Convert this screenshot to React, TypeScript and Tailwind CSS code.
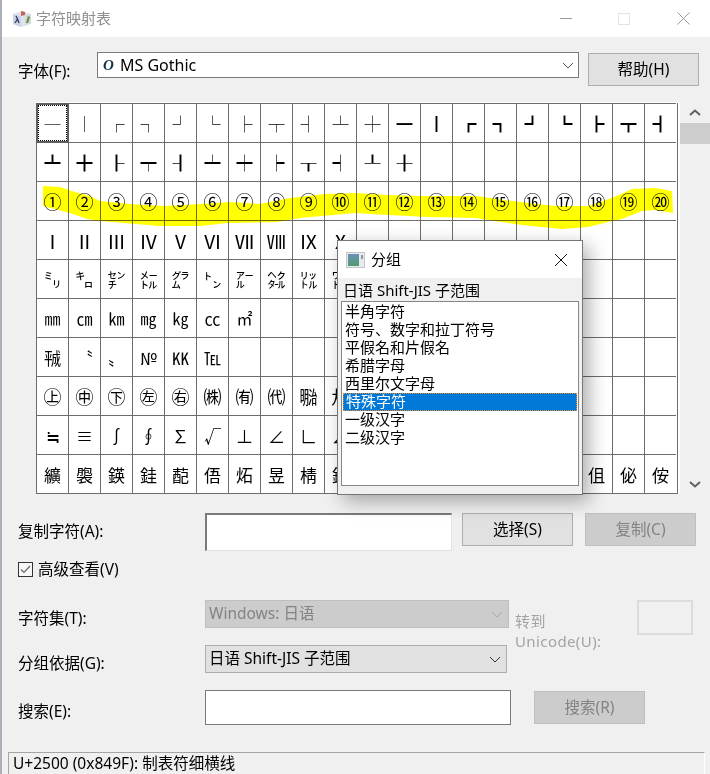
const UI_FONT = "font-['Noto_Sans','Noto_Sans_CJK_SC',sans-serif]"

const ROWS: { chars: string; size: string }[] = [
  { chars: '─│┌┐┘└├┬┤┴┼━┃┏┓┛┗┣┳┫', size: 'text-[16px]' },
  { chars: '┻╋┠┯┨┷┿┝┰┥┸╂', size: 'text-[16px]' },
  { chars: '①②③④⑤⑥⑦⑧⑨⑩⑪⑫⑬⑭⑮⑯⑰⑱⑲⑳', size: 'text-[18px]' },
  { chars: 'ⅠⅡⅢⅣⅤⅥⅦⅧⅨⅩ', size: 'text-[19px]' },
  { chars: '㍉㌔㌢㍍㌘㌧㌃㌶㍑㍗', size: 'text-[18px]' },
  { chars: '㎜㎝㎞㎎㎏㏄㎡', size: 'text-[16px]' },
  { chars: '㍻〝〟№㏍℡', size: 'text-[17px]' },
  { chars: '㊤㊥㊦㊧㊨㈱㈲㈹㍾㍽', size: 'text-[18px]' },
  { chars: '≒≡∫∮∑√⊥∠∟⊿', size: 'text-[17px]' },
  { chars: '纊褜鍈銈蓜俉炻昱棈鋹曻彅丨仡仼伀伃伹佖侒', size: 'text-[17px]' },
]

const GROUPS = ['半角字符', '符号、数字和拉丁符号', '平假名和片假名', '希腊字母', '西里尔文字母', '特殊字符', '一级汉字', '二级汉字']

const HIGHLIGHT =
  'M7 83 L24 84 L39 89 L54 93 L64 98 L94 101 L129 103 L164 101 L194 99 L224 101 L254 95 L289 91 L319 90 L352 92 L384 93 L440 93 L476 98 L519 103 L552 103 L576 95 L596 86 L619 85 L636 88 L637 110 L619 107 L606 108 L586 116 L576 118 L552 124 L526 126 L486 122 L452 117 L439 115 L392 114 L352 112 L319 110 L264 115 L241 119 L191 120 L164 123 L124 123 L64 118 L51 116 L34 110 L7 103 Z'

function Chevron({ className }: { className: string }) {
  return (
    <svg width="12" height="7" viewBox="0 0 12 7" fill="none" className={className}>
      <path d="M1 1l5 5 5-5" stroke="currentColor" strokeWidth="1" />
    </svg>
  )
}

function AppIcon() {
  return (
    <svg width="20" height="18" viewBox="0 0 20 18" className="shrink-0">
      <path d="M1 4l9-3 9 3v10l-9 3-9-3z" fill="#dfe3ea" />
      <path d="M1 4l8 2v11l-8-3z" fill="#c9d3e6" />
      <path d="M13 5l6-1v9l-6 2z" fill="#d5d8d8" />
      <path d="M14 13l2-7 2 1-2 6z" fill="#5f8f45" />
      <path d="M9 1l4 1v3l-4 1z" fill="#c9605a" />
      <path d="M3 13l2.5-4L4 6M5.500 9L7 13" stroke="#26345e" strokeWidth="1.2" fill="none" />
    </svg>
  )
}

function DialogIcon() {
  return (
    <svg width="19" height="16" viewBox="0 0 19 16" className="shrink-0">
      <defs>
        <linearGradient id="dlg" x1="0" y1="0" x2="0" y2="1">
          <stop offset="0" stopColor="#6d90b8" />
          <stop offset="1" stopColor="#4f9a6c" />
        </linearGradient>
      </defs>
      <rect x="0.5" y="0.5" width="18" height="15" fill="#e8ebee" stroke="#c2c7cc" />
      <rect x="2" y="2" width="11" height="12" fill="url(#dlg)" />
      <rect x="15" y="3" width="2" height="4" fill="#8a97a5" />
    </svg>
  )
}

function Btn({ label, disabled, className = '' }: { label: string; disabled?: boolean; className?: string }) {
  return (
    <div
      className={`flex h-[33px] w-[111px] shrink-0 items-center justify-center border text-[15.5px] ${
        disabled ? 'border-[#bfbfbf] bg-[#cccccc] text-[#838383]' : 'border-[#adadad] bg-[#e1e1e1] text-black'
      } ${className}`}
    >
      {label}
    </div>
  )
}

function FieldLabel({ children, className = '' }: { children: string; className?: string }) {
  return <span className={`block w-[187px] shrink-0 text-[15.5px] leading-5 text-black ${className}`}>{children}</span>
}

function CharGrid() {
  return (
    <div className="relative ml-[34px] mt-[16px] w-[644px] shrink-0 border-r-[2px] border-t border-white">
      <div className="grid grid-cols-[repeat(20,32px)] grid-rows-[repeat(10,39px)] border-b border-r border-[#6d6d6d] bg-white font-['Noto_Sans_CJK_JP',sans-serif] text-black">
        {ROWS.flatMap((row, r) =>
          Array.from({ length: 20 }, (_, c) => {
            const ch = Array.from(row.chars)[c] ?? ''
            return (
              <div key={`${r}-${c}`} className={`flex items-center justify-center overflow-hidden border-l border-t border-[#6d6d6d] leading-none ${row.size}`}>
                {ch}
              </div>
            )
          }),
        )}
      </div>
      {/* focused cell */}
      <div className="absolute left-0 top-0 h-[40px] w-[33px] border-2 border-[#5f5f5f]">
        <div className="h-full w-full border border-dotted border-black" />
      </div>
      {/* marker scribble over row 3 */}
      <svg width="644" height="391" viewBox="0 0 644 391" className="pointer-events-none absolute left-0 top-0 mix-blend-multiply">
        <path d={HIGHLIGHT} fill="#ffff00" />
      </svg>
    </div>
  )
}

function GroupDialog() {
  return (
    <div className="absolute left-[337px] top-[240px] flex h-[255px] w-[246px] flex-col border border-[#777777] bg-[#f0f0f0] shadow-[6px_6px_18px_rgba(0,0,0,0.32)]">
      <div className="flex h-[37px] shrink-0 items-center bg-white pl-[8px] pr-[14px]">
        <DialogIcon />
        <span className="ml-[6px] flex-1 text-[15px] text-black">分组</span>
        <svg width="14" height="14" viewBox="0 0 14 14" fill="none">
          <path d="M1 1l12 12M13 1L1 13" stroke="#111" strokeWidth="1" />
        </svg>
      </div>
      <div className="pl-[5px] pt-[2px] text-[15px] leading-[20px] text-black">日语 Shift-JIS 子范围</div>
      <div className="mx-[3px] mt-[1px] h-[185px] border border-[#828790] bg-white p-px font-['Noto_Sans_CJK_JP',sans-serif] text-[15px] leading-[16px] text-black">
        {GROUPS.map((g) => (
          <div
            key={g}
            className={`h-[18px] whitespace-nowrap pl-[2px] ${
              g === '特殊字符' ? 'border border-dotted border-[#f08a24] bg-[#0078d7] pl-[1px] leading-[14px] text-white' : ''
            }`}
          >
            {g}
          </div>
        ))}
      </div>
    </div>
  )
}

export default function App() {
  return (
    <div className={`relative h-[774px] w-[710px] overflow-hidden bg-[#f0f0f0] ${UI_FONT}`}>
      <div className="flex h-full flex-col border-l-2 border-[#a9b0b8]">
        {/* title bar */}
        <div className="flex h-[37px] shrink-0 items-center bg-white pl-[10px]">
          <AppIcon />
          <span className="ml-[4px] flex-1 text-[15px] text-[#8f8f8f]">字符映射表</span>
          <div className="flex items-center pr-[20px]">
            <div className="h-px w-[12px] bg-[#9a9a9a]" />
            <div className="ml-[46px] h-[12px] w-[12px] border border-[#e3e3e3]" />
            <svg width="13" height="13" viewBox="0 0 13 13" fill="none" className="ml-[47px]">
              <path d="M.5.5l12 12M12.5.5l-12 12" stroke="#999999" strokeWidth="1" />
            </svg>
          </div>
        </div>

        {/* font row */}
        <div className="ml-[16px] mt-[15px] flex items-start">
          <span className="mt-[9px] w-[79px] shrink-0 text-[15.5px] leading-5 text-black">字体(F):</span>
          <div className="flex h-[26px] w-[482px] items-center border border-[#7a7a7a] bg-white pl-[5px] pr-[4px]">
            <span className="w-[17px] font-['Liberation_Serif',serif] text-[15px] font-bold italic text-[#10324a]">O</span>
            <span className="flex-1 text-[16px] text-black">MS Gothic</span>
            <Chevron className="text-[#555555]" />
          </div>
          <Btn label="帮助(H)" className="ml-[9px] mt-px" />
        </div>

        <div className="flex items-start">
          <CharGrid />
          {/* scrollbar */}
          <div className="mt-[16px] flex h-[392px] w-[30px] flex-col items-center">
            <svg width="12" height="7" viewBox="0 0 12 7" fill="none" className="mt-[7px]">
              <path d="M1 6l5-4.500L11 6" stroke="#606060" strokeWidth="2" />
            </svg>
            <div className="mt-[7px] h-[21px] w-full bg-[#cdcdcd]" />
            <div className="flex-1" />
            <svg width="12" height="7" viewBox="0 0 12 7" fill="none" className="mb-[6px]">
              <path d="M1 1l5 4.500L11 1" stroke="#606060" strokeWidth="2" />
            </svg>
          </div>
        </div>

        {/* copy row */}
        <div className="ml-[16px] mt-[19px] flex items-start">
          <FieldLabel className="mt-[8px]">复制字符(A):</FieldLabel>
          <div className="h-[38px] w-[247px] shrink-0 border-b border-l-2 border-r border-t-2 border-b-[#e3e3e3] border-l-[#7a7a7a] border-r-[#e3e3e3] border-t-[#7a7a7a] bg-white" />
          <Btn label="选择(S)" className="ml-[10px]" />
          <Btn label="复制(C)" disabled className="ml-[12px]" />
        </div>

        {/* advanced view */}
        <div className="ml-[16px] mt-[8px] flex items-center">
          <div className="flex h-[15px] w-[15px] items-center justify-center border border-[#333333] bg-[#f7f7f7]">
            <svg width="11" height="9" viewBox="0 0 11 9" fill="none">
              <path d="M1 4.500L4 7.500 10 1" stroke="#666666" strokeWidth="1.2" />
            </svg>
          </div>
          <span className="ml-[5px] text-[15.5px] leading-5 text-black">高级查看(V)</span>
        </div>

        {/* charset + group rows, go-to unicode on the right */}
        <div className="ml-[16px] mt-[21px] flex items-start">
          <div className="flex w-[497px] shrink-0 flex-col">
            <div className="flex items-center">
              <FieldLabel className="mt-[8px]">字符集(T):</FieldLabel>
              <div className="flex h-[28px] w-[304px] items-center justify-between border border-[#bfbfbf] bg-[#cccccc] pl-[3px] pr-[5px] text-[15.5px] text-[#838383]">
                Windows: 日语
                <Chevron className="text-[#a8a8a8]" />
              </div>
            </div>
            <div className="mt-[17px] flex items-center">
              <FieldLabel className="mt-[8px]">分组依据(G):</FieldLabel>
              <div className="flex h-[28px] w-[302px] items-center justify-between border border-[#adadad] bg-[#e1e1e1] pl-[3px] pr-[5px] text-[15.5px] text-black">
                日语 Shift-JIS 子范围
                <Chevron className="text-[#333333]" />
              </div>
            </div>
          </div>
          <div className="mt-[11px] w-[122px] shrink-0 text-[15px] leading-[20px] tracking-[0.4px] text-[#a3a3a3]">
            转到
            <br />
            Unicode(U):
          </div>
          <div className="h-[35px] w-[56px] shrink-0 border-2 border-[#dcdcdc] bg-[#f0f0f0]" />
        </div>

        {/* search row */}
        <div className="ml-[16px] mt-[17px] flex items-center">
          <FieldLabel className="mt-[7px]">搜索(E):</FieldLabel>
          <div className="h-[35px] w-[306px] shrink-0 border border-[#7a7a7a] bg-white" />
          <Btn label="搜索(R)" disabled className="ml-[23px]" />
        </div>

        {/* status bar */}
        <div className="ml-[6px] mr-[5px] mt-auto flex h-[22px] items-center border-l border-r border-t border-[#a5a5a5] border-r-white pl-[4px] text-[15.5px] text-black">
          U+2500 (0x849F): 制表符细横线
        </div>
      </div>
      <GroupDialog />
    </div>
  )
}
